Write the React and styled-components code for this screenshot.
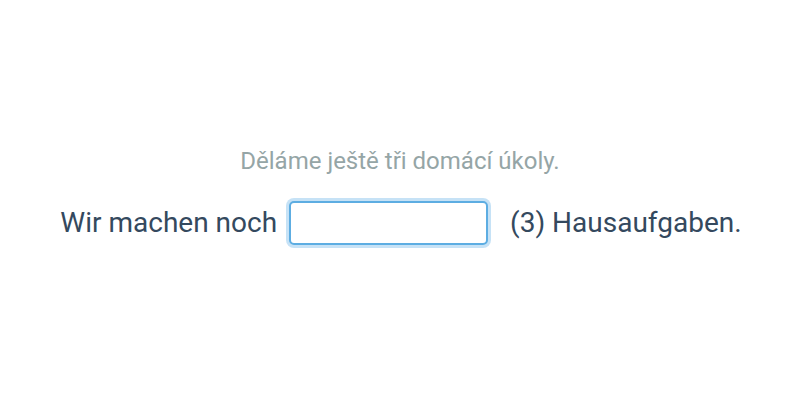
import React from "react";
import styled, { createGlobalStyle } from "styled-components";

const Global = createGlobalStyle`
  html, body { margin: 0; padding: 0; background: #ffffff; }
  body { font-family: Roboto, "Noto Sans", sans-serif; }
`;

const Page = styled.div`
  height: 400px;
  display: flex;
  flex-direction: column;
  align-items: center;
  justify-content: center;
  gap: 26px;
  padding-bottom: 8px;
  box-sizing: border-box;
`;

const Hint = styled.div`
  font-size: 24px;
  color: #95a5a6;
  line-height: 28px;
`;

const Sentence = styled.div`
  display: flex;
  align-items: center;
  font-size: 28px;
  color: #34495e;
  line-height: 34px;
  padding-left: 2px;
`;

const Gap = styled.input`
  width: 199px;
  height: 44px;
  box-sizing: border-box;
  margin: 0 12px 0 12px;
  border: 2px solid #5dade2;
  border-radius: 5px;
  box-shadow: 0 0 0 3px #c6e2f6;
  outline: none;
  font-family: inherit;
  font-size: 22px;
  padding: 0 8px;
  background: #fff;
`;

const Tail = styled.span`
  margin-left: 10px;
`;

export default function App() {
  return (
    <>
      <Global />
      <Page>
        <Hint>Děláme ještě tři domácí úkoly.</Hint>
        <Sentence>
          <span>Wir machen noch</span>
          <Gap type="text" />
          <Tail>(3) Hausaufgaben.</Tail>
        </Sentence>
      </Page>
    </>
  );
}
